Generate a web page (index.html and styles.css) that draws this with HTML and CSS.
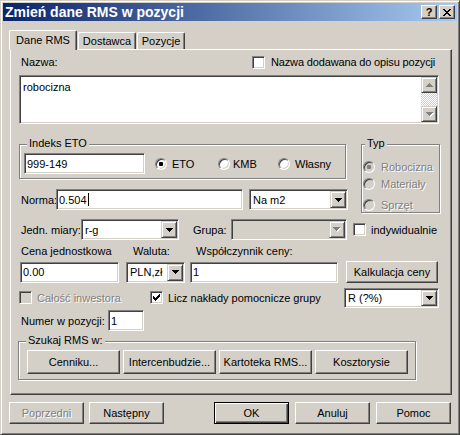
FILE: index.html
```html
<!DOCTYPE html>
<html>
<head>
<meta charset="utf-8">
<link rel="stylesheet" href="styles.css">
</head>
<body>
<div class="window">
  <div class="titlebar">
    <span class="title">Zmień dane RMS w pozycji</span>
    <span class="tbtn help">?</span>
    <span class="tbtn close"><svg width="8" height="7" viewBox="0 0 8 7"><path d="M0 0h2v1H0z M6 0h2v1H6z M1 1h2v1H1z M5 1h2v1H5z M2 2h4v1H2z M3 3h2v1H3z M2 4h4v1H2z M1 5h2v1H1z M5 5h2v1H5z M0 6h2v1H0z M6 6h2v1H6z"/></svg></span>
  </div>
  <div class="client">
    <div class="tabs">
      <div class="tab sel">Dane RMS</div>
      <div class="tab t2">Dostawca</div>
      <div class="tab t3">Pozycje</div>
    </div>
    <div class="panel">
      <div class="row r-nazwa">
        <span class="lbl l-nazwa">Nazwa:</span>
        <span class="chk"></span><span class="chk-lbl nz-lbl">Nazwa dodawana do opisu pozycji</span>
      </div>
      <div class="memo">
        <div class="memo-text">robocizna</div>
        <div class="vscroll">
          <div class="sbtn"><svg width="7" height="5" viewBox="0 0 7 5"><path class="hl" d="M4 1h1v1h1v1h1v1H1v-1h1v-1h1v-1z"/><path class="sh" d="M3 0h1v1h1v1h1v1h1v1H0v-1h1v-1h1v-1h1z"/></svg></div>
          <div class="strack"></div>
          <div class="sbtn"><svg width="7" height="5" viewBox="0 0 7 5"><path class="hl" d="M1 1h7v1h-1v1h-1v1h-1v1h-1v-1h-1v-1h-1v-1h-1z"/><path class="sh" d="M0 0h7v1h-1v1h-1v1h-1v1h-1v-1h-1v-1h-1v-1h-1z"/></svg></div>
        </div>
      </div>
      <div class="mid">
        <div class="leftcol">
          <div class="group g-eto">
            <div class="legend lg-eto">Indeks ETO</div>
            <div class="eto-row">
              <div class="edit w-eto">999-149</div>
              <span class="radio r1 on"><span class="dot"></span></span><span class="rlbl rl1">ETO</span>
              <span class="radio r2"></span><span class="rlbl rl2">KMB</span>
              <span class="radio r3"></span><span class="rlbl rl3">Własny</span>
            </div>
          </div>
          <div class="row r-norma">
            <span class="lbl l-norma">Norma:</span>
            <div class="edit w-norma">0.504<span class="caret"></span></div>
            <div class="combo w-nam2"><span class="ctext">Na m2</span><span class="cbtn"><svg width="7" height="4" viewBox="0 0 7 4"><path d="M0 0h7v1h-1v1h-1v1h-1v1h-1v-1h-1v-1h-1v-1h-1z"/></svg></span></div>
          </div>
        </div>
        <div class="group g-typ">
          <div class="legend lg-typ">Typ</div>
          <div class="typ-item ti1"><span class="radio dis on"><span class="dot"></span></span><span class="dtext">Robocizna</span></div>
          <div class="typ-item ti2"><span class="radio dis"></span><span class="dtext">Materiały</span></div>
          <div class="typ-item ti3"><span class="radio dis"></span><span class="dtext">Sprzęt</span></div>
        </div>
      </div>
      <div class="row r-jedn">
        <span class="lbl l-jedn">Jedn. miary:</span>
        <div class="combo w-jedn"><span class="ctext">r-g</span><span class="cbtn"><svg width="7" height="4" viewBox="0 0 7 4"><path d="M0 0h7v1h-1v1h-1v1h-1v1h-1v-1h-1v-1h-1v-1h-1z"/></svg></span></div>
        <span class="lbl l-grupa">Grupa:</span>
        <div class="combo w-grupa disabled"><span class="ctext"></span><span class="cbtn"><svg width="8" height="5" viewBox="0 0 8 5"><path class="hl" d="M1 1h7v1h-1v1h-1v1h-1v1h-1v-1h-1v-1h-1v-1h-1z"/><path class="sh" d="M0 0h7v1h-1v1h-1v1h-1v1h-1v-1h-1v-1h-1v-1h-1z"/></svg></span></div>
        <span class="chk c-ind"></span><span class="chk-lbl">indywidualnie</span>
      </div>
      <div class="row r-cenalbl">
        <span class="lbl l-cena">Cena jednostkowa</span>
        <span class="lbl l-waluta">Waluta:</span>
        <span class="lbl">Współczynnik ceny:</span>
      </div>
      <div class="row r-cena">
        <div class="edit w-cena">0.00</div>
        <div class="combo w-pln"><span class="ctext">PLN,zł</span><span class="cbtn"><svg width="7" height="4" viewBox="0 0 7 4"><path d="M0 0h7v1h-1v1h-1v1h-1v1h-1v-1h-1v-1h-1v-1h-1z"/></svg></span></div>
        <div class="edit w-wsp">1</div>
        <div class="btn b-kalk">Kalkulacja ceny</div>
      </div>
      <div class="row r-licz">
        <span class="chk dis c-cal"></span><span class="chk-lbl dtext l-cal">Całość inwestora</span>
        <span class="chk c-licz"><svg width="7" height="7" viewBox="0 0 7 7"><path d="M0 2h1v3H0z M1 3h1v3H1z M2 4h1v3H2z M3 3h1v3H3z M4 2h1v3H4z M5 1h1v3H5z M6 0h1v3H6z"/></svg></span><span class="chk-lbl">Licz nakłady pomocnicze grupy</span>
        <div class="combo w-r"><span class="ctext">R (?%)</span><span class="cbtn"><svg width="7" height="4" viewBox="0 0 7 4"><path d="M0 0h7v1h-1v1h-1v1h-1v1h-1v-1h-1v-1h-1v-1h-1z"/></svg></span></div>
      </div>
      <div class="row r-numer">
        <span class="lbl l-numer">Numer w pozycji:</span>
        <div class="edit w-numer">1</div>
      </div>
      <div class="group g-szukaj">
        <div class="legend lg-szukaj">Szukaj RMS w:</div>
        <div class="szukaj-row">
          <div class="btn b-s">Cenniku...</div>
          <div class="btn b-s">Intercenbudzie...</div>
          <div class="btn b-s">Kartoteka RMS...</div>
          <div class="btn b-s">Kosztorysie</div>
        </div>
      </div>
    </div>
    <div class="footer">
      <div class="btn b-f dis"><span class="dtext">Poprzedni</span></div>
      <div class="btn b-f">Następny</div>
      <div class="btn b-f default b-ok">OK</div>
      <div class="btn b-f">Anuluj</div>
      <div class="btn b-f">Pomoc</div>
    </div>
  </div>
</div>
</body>
</html>
```

FILE: styles.css
```css
* { box-sizing: border-box; }
html, body { margin: 0; padding: 0; }
body {
  font-family: "Liberation Sans", Arial, sans-serif;
  font-size: 11px;
  color: #000;
  background: #d4d0c8;
}
.window {
  width: 460px;
  height: 435px;
  background: #d4d0c8;
  border: 1px solid;
  border-color: #d4d0c8 #404040 #404040 #d4d0c8;
  box-shadow: inset 1px 1px #fff, inset -1px -1px #808080;
  padding: 2px;
  display: flex;
  flex-direction: column;
}
.titlebar {
  height: 18px;
  flex: none;
  background: linear-gradient(to right, #0a246a, #a6caf0);
  display: flex;
  align-items: center;
  padding: 0 2px;
}
.title {
  flex: 1;
  color: #fff;
  font-weight: bold;
  font-size: 14px;
  line-height: 18px;
  white-space: nowrap;
}
.tbtn {
  width: 16px;
  height: 14px;
  background: #d4d0c8;
  border: 1px solid;
  border-color: #fff #404040 #404040 #fff;
  box-shadow: inset -1px -1px #808080;
  display: flex;
  align-items: center;
  justify-content: center;
  font-weight: bold;
  font-size: 11px;
  line-height: 12px;
}
.close { margin-left: 2px; }
.close svg { fill: #000; display: block; }

.client {
  flex: 1;
  padding: 9px 5px 0 7px;
}
.tabs {
  height: 19px;
  display: flex;
  align-items: flex-end;
  margin-left: -1px;
  position: relative;
  z-index: 2;
}
.tab {
  height: 17px;
  background: #d4d0c8;
  border-left: 1px solid #fff;
  border-top: 1px solid #fff;
  border-right: 1px solid #404040;
  border-radius: 2px 2px 0 0;
  box-shadow: inset -1px 0 #808080;
  display: flex;
  align-items: center;
  justify-content: center;
  white-space: nowrap;
}
.tab.sel {
  width: 68px;
  height: 20px;
  margin-bottom: -1px;
  padding-bottom: 1px;
}
.tab.t2 { width: 58px; margin-left: 1px; }
.tab.t3 { width: 48px; margin-left: 1px; }

.panel {
  height: 346px;
  border: 1px solid;
  border-color: #fff #404040 #404040 #fff;
  box-shadow: inset -1px -1px #808080;
  padding: 5px 11px 0 8px;
}
.row {
  display: flex;
  align-items: center;
  white-space: nowrap;
}
.lbl { display: inline-block; flex: none; }
.r-nazwa { height: 14px; }
.l-nazwa { margin-left: 2px; width: 231px; }
.nz-lbl { letter-spacing: -0.15px; }
.chk {
  width: 13px;
  height: 13px;
  flex: none;
  background: #fff;
  border: 1px solid;
  border-color: #808080 #fff #fff #808080;
  box-shadow: inset 1px 1px #404040, inset -1px -1px #d4d0c8;
  display: flex;
  align-items: center;
  justify-content: center;
}
.chk.dis { background: #d4d0c8; }
.chk svg { display: block; fill: #000; }
.chk-lbl { margin-left: 6px; flex: none; }

.memo {
  margin-top: 6px;
  height: 49px;
  width: 420px;
  background: #fff;
  border: 1px solid;
  border-color: #808080 #fff #fff #808080;
  box-shadow: inset 1px 1px #404040, inset -1px -1px #d4d0c8;
  padding: 1px;
  display: flex;
}
.memo-text { flex: 1; padding: 4px 2px; }
.vscroll { width: 16px; display: flex; flex-direction: column; }
.sbtn {
  width: 16px;
  height: 16px;
  flex: none;
  background: #d4d0c8;
  border: 1px solid;
  border-color: #d4d0c8 #404040 #404040 #d4d0c8;
  box-shadow: inset 1px 1px #fff, inset -1px -1px #808080;
  display: flex;
  align-items: center;
  justify-content: center;
}
.sbtn svg { display: block; overflow: visible; }
.hl { fill: #fff; }
.sh { fill: #808080; }
.strack {
  flex: 1;
  background-color: #fff;
  background-image: repeating-conic-gradient(#d4d0c8 0 25%, #fff 0 50%);
  background-size: 2px 2px;
}

.mid { display: flex; margin-top: 20px; }
.leftcol { width: 330px; }
.group {
  border: 1px solid #808080;
  box-shadow: inset 1px 1px #fff, 1px 1px #fff;
}
.legend {
  display: block;
  width: fit-content;
  height: 13px;
  line-height: 13px;
  background: #d4d0c8;
  padding: 0 2px;
  margin: -8px 0 -1px 7px;
  white-space: nowrap;
}
.g-eto { width: 327px; height: 35px; }
.eto-row { display: flex; align-items: center; padding-left: 4px; height: 21px; margin-top: 4px; white-space: nowrap; }
.edit {
  height: 21px;
  flex: none;
  background: #fff;
  border: 1px solid;
  border-color: #808080 #fff #fff #808080;
  box-shadow: inset 1px 1px #404040, inset -1px -1px #d4d0c8;
  padding: 0 2px;
  display: flex;
  align-items: center;
  white-space: nowrap;
}
.w-eto { width: 121px; }
.radio {
  width: 12px;
  height: 12px;
  flex: none;
  border-radius: 50%;
  background: #fff;
  border: 1px solid;
  border-color: #808080 #fff #fff #808080;
  box-shadow: inset 1px 1px #404040, inset -1px -1px #d4d0c8;
  display: flex;
  align-items: center;
  justify-content: center;
}
.radio .dot { width: 4px; height: 4px; border-radius: 1px; background: #000; }
.radio.dis { background: #d4d0c8; }
.radio.dis .dot { background: #808080; }
.r1 { margin-left: 10px; }
.rlbl { flex: none; }
.rl1 { margin-left: 5px; width: 46px; }
.rl2 { margin-left: 3px; width: 45px; }
.rl3 { margin-left: 5px; }

.r-norma { margin-top: 10px; height: 21px; }
.l-norma { margin-left: 2px; width: 35px; }
.w-norma { width: 187px; }
.caret { display: inline-block; width: 1px; height: 13px; background: #000; margin-left: 1px; }
.combo {
  height: 21px;
  flex: none;
  background: #fff;
  border: 1px solid;
  border-color: #808080 #fff #fff #808080;
  box-shadow: inset 1px 1px #404040, inset -1px -1px #d4d0c8;
  padding: 1px;
  display: flex;
  align-items: stretch;
}
.combo.disabled { background: #d4d0c8; }
.ctext { flex: 1; display: flex; align-items: center; padding-left: 2px; white-space: nowrap; overflow: hidden; }
.cbtn {
  width: 16px;
  flex: none;
  background: #d4d0c8;
  border: 1px solid;
  border-color: #d4d0c8 #404040 #404040 #d4d0c8;
  box-shadow: inset 1px 1px #fff, inset -1px -1px #808080;
  display: flex;
  align-items: center;
  justify-content: center;
}
.cbtn svg { display: block; fill: #000; overflow: visible; }
.w-nam2 { width: 99px; margin-left: 6px; }

.g-typ { width: 79px; height: 69px; margin-left: 12px; }
.lg-typ { margin-left: 3px; }
.typ-item { display: flex; align-items: center; padding-left: 1px; height: 17px; white-space: nowrap; }
.typ-item .dtext { margin-left: 6px; }
.ti1 { margin-top: 9px; }
.ti3 { margin-top: 4px; }
.dtext { color: #808080; text-shadow: 1px 1px 0 #fff; }

.r-jedn { margin-top: 6px; height: 21px; }
.l-jedn { margin-left: 2px; width: 60px; }
.w-jedn { width: 98px; }
.l-grupa { margin-left: 14px; width: 38px; }
.w-grupa { width: 116px; }
.c-ind { margin-left: 6px; }
.r-jedn .chk-lbl { margin-left: 5px; }

.r-cenalbl { margin-top: 4px; height: 14px; }
.l-cena { margin-left: 2px; width: 112px; }
.l-waluta { width: 63px; }
.r-cena { margin-top: 3px; height: 22px; }
.w-cena { width: 99px; margin-left: 1px; }
.w-pln { width: 59px; margin-left: 7px; }
.w-wsp { width: 148px; margin-left: 5px; }
.btn {
  height: 22px;
  flex: none;
  background: #d4d0c8;
  border: 1px solid;
  border-color: #fff #404040 #404040 #fff;
  box-shadow: inset -1px -1px #808080;
  display: flex;
  align-items: center;
  justify-content: center;
  white-space: nowrap;
}
.b-kalk { width: 92px; margin-left: 8px; }

.r-licz { margin-top: 4px; height: 21px; }
.r-licz .chk-lbl { margin-left: 5px; }
.r-licz .l-cal { width: 113px; }
.w-r { width: 95px; margin-left: auto; margin-right: 1px; height: 20px; }

.r-numer { margin-top: 2px; height: 21px; }
.l-numer { margin-left: 2px; width: 87px; }
.w-numer { width: 36px; }

.g-szukaj { width: 398px; height: 39px; margin-top: 10px; margin-left: -1px; }
.lg-szukaj { margin-left: 7px; }
.szukaj-row { display: flex; padding-left: 8px; margin-top: 4px; }
.b-s { width: 93px; height: 24px; margin-right: 3px; }

.footer { display: flex; margin-top: 7px; margin-left: -1px; }
.b-f { width: 75px; margin-right: 5px; }
.b-f:nth-child(2) { margin-right: 50px; }
.b-f:nth-child(3), .b-f:nth-child(4) { margin-right: 6px; }
.b-ok {
  border: 1px solid #000;
  box-shadow: inset 1px 1px #fff, inset -1px -1px #404040, inset -2px -2px #808080;
}
```
